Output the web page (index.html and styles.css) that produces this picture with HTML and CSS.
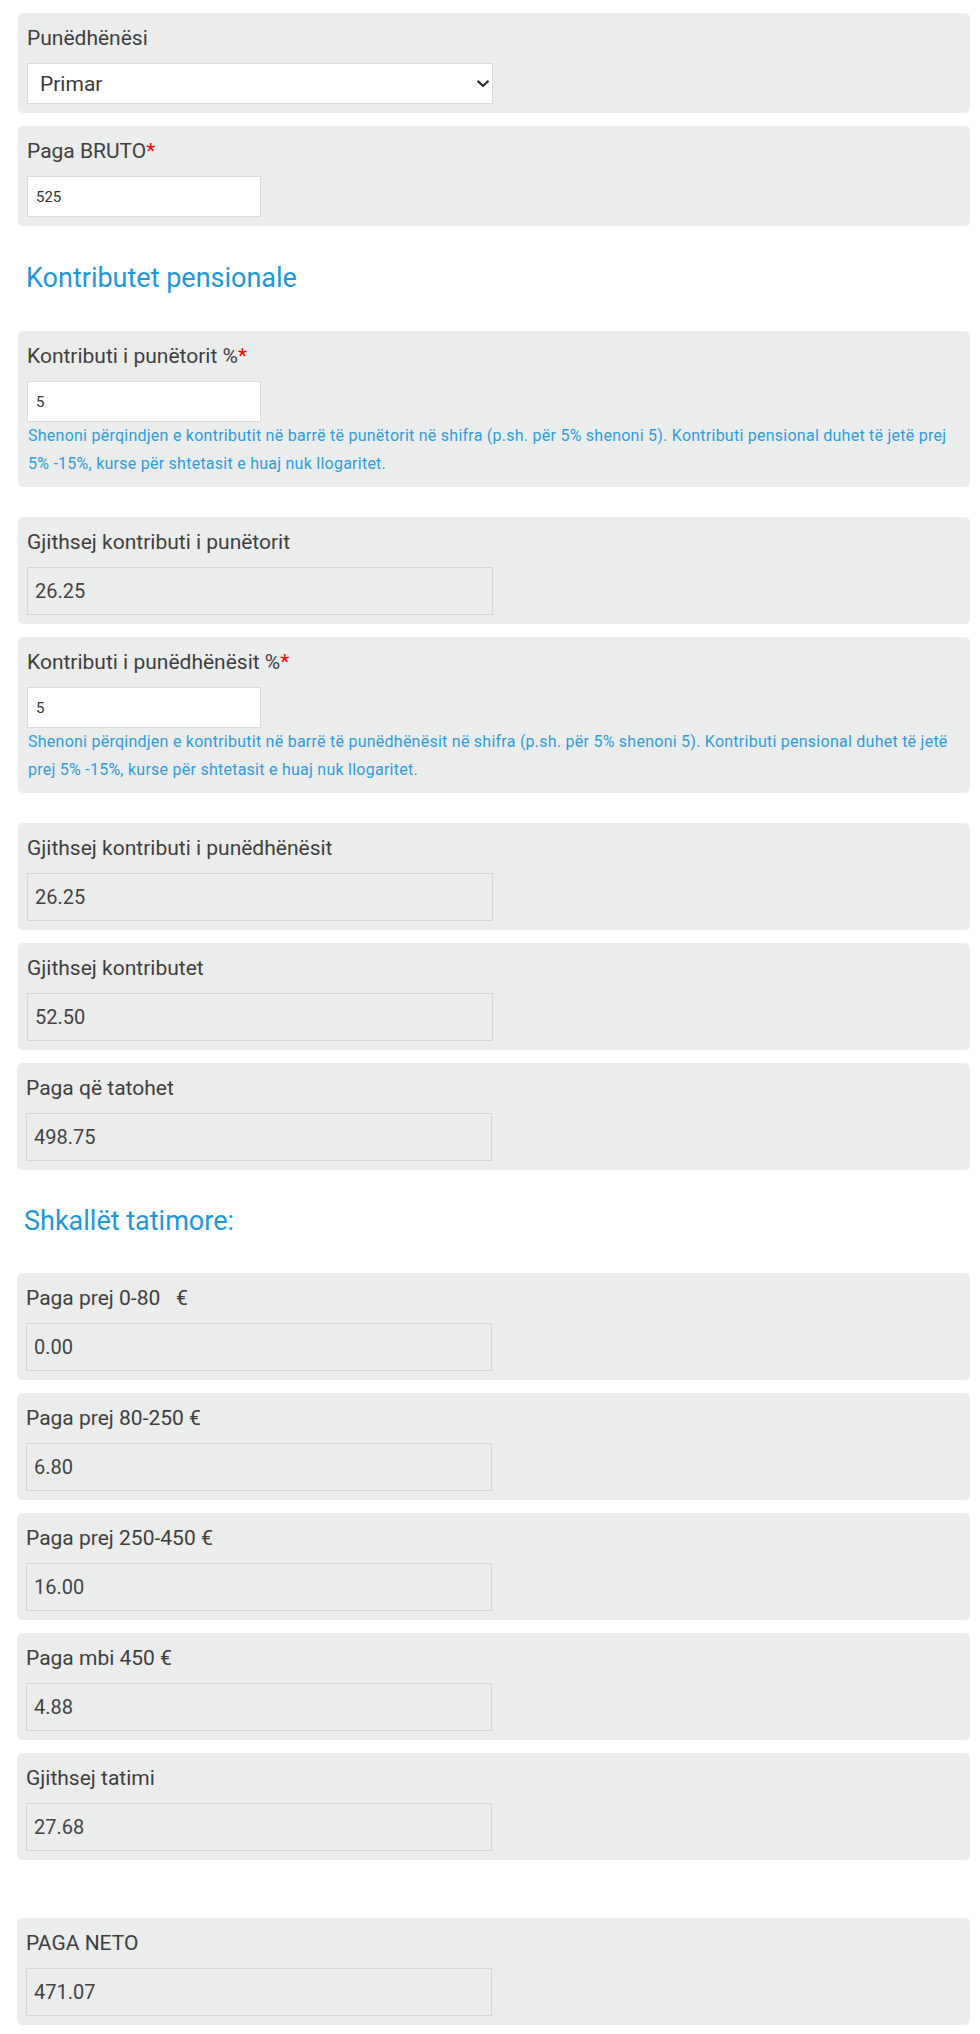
FILE: index.html
```html
<!DOCTYPE html>
<html lang="sq">
<head>
<meta charset="utf-8">
<title>Kalkulatori i pagës</title>
<link rel="stylesheet" href="styles.css">
</head>
<body>
<div class="form">
  <div class="card">
    <label class="card__label">Punëdhënësi</label>
    <div class="select-wrap">
      <select class="field field--select">
        <option>Primar</option>
        <option>Sekondar</option>
      </select>
      <svg class="select-wrap__chevron" width="12" height="8" viewBox="0 0 12 8" aria-hidden="true">
        <path d="M1.2 1.4 L6 6 L10.8 1.4" fill="none" stroke="#2f3337" stroke-width="2.2" stroke-linecap="round" stroke-linejoin="round"/>
      </svg>
    </div>
  </div>
  <div class="card">
    <label class="card__label">Paga BRUTO<span class="req">*</span></label>
    <input class="field field--input" type="text" value="525">
  </div>

  <h3 class="section-title">Kontributet pensionale</h3>

  <div class="card card--spaced">
    <label class="card__label">Kontributi i punëtorit %<span class="req">*</span></label>
    <input class="field field--input" type="text" value="5">
    <p class="help">Shenoni përqindjen e kontributit në barrë të punëtorit në shifra (p.sh. për 5% shenoni 5). Kontributi pensional duhet të jetë prej 5% -15%, kurse për shtetasit e huaj nuk llogaritet.</p>
  </div>
  <div class="card">
    <label class="card__label">Gjithsej kontributi i punëtorit</label>
    <input class="field field--readonly" type="text" value="26.25" readonly>
  </div>
  <div class="card card--spaced">
    <label class="card__label">Kontributi i punëdhënësit %<span class="req">*</span></label>
    <input class="field field--input" type="text" value="5">
    <p class="help">Shenoni përqindjen e kontributit në barrë të punëdhënësit në shifra (p.sh. për 5% shenoni 5). Kontributi pensional duhet të jetë prej 5% -15%, kurse për shtetasit e huaj nuk llogaritet.</p>
  </div>
  <div class="card">
    <label class="card__label">Gjithsej kontributi i punëdhënësit</label>
    <input class="field field--readonly" type="text" value="26.25" readonly>
  </div>
  <div class="card">
    <label class="card__label">Gjithsej kontributet</label>
    <input class="field field--readonly" type="text" value="52.50" readonly>
  </div>
  <div class="card card--shift">
    <label class="card__label">Paga që tatohet</label>
    <input class="field field--readonly" type="text" value="498.75" readonly>
  </div>

  <h3 class="section-title section-title--shift">Shkallët tatimore:</h3>

  <div class="card card--shift">
    <label class="card__label">Paga prej 0-80&nbsp;&nbsp; €</label>
    <input class="field field--readonly" type="text" value="0.00" readonly>
  </div>
  <div class="card card--shift">
    <label class="card__label">Paga prej 80-250 €</label>
    <input class="field field--readonly" type="text" value="6.80" readonly>
  </div>
  <div class="card card--shift">
    <label class="card__label">Paga prej 250-450 €</label>
    <input class="field field--readonly" type="text" value="16.00" readonly>
  </div>
  <div class="card card--shift">
    <label class="card__label">Paga mbi 450 €</label>
    <input class="field field--readonly" type="text" value="4.88" readonly>
  </div>
  <div class="card card--shift">
    <label class="card__label">Gjithsej tatimi</label>
    <input class="field field--readonly" type="text" value="27.68" readonly>
  </div>

  <div class="card card--shift card--final">
    <label class="card__label">PAGA NETO</label>
    <input class="field field--readonly" type="text" value="471.07" readonly>
  </div>
</div>
</body>
</html>
```

FILE: styles.css
```css
html, body {
  margin: 0;
  padding: 0;
  background: #ffffff;
}

body {
  font-family: Roboto, "Noto Sans", "Liberation Sans", Arial, sans-serif;
  color: #3b3b3b;
}

.form {
  display: flex;
  flex-direction: column;
  gap: 13px;
  padding: 13px 10px 11px 18px;
}

.card {
  background: #ebecec;
  border-radius: 5px;
  padding: 10px 9px 9px 9px;
}

.card--shift {
  margin-left: -1px;
}

.card--spaced {
  margin-bottom: 17px;
}

.card--final {
  margin-top: 45px;
}

.card__label {
  display: block;
  font-size: 21px;
  line-height: 30px;
  margin-bottom: 10px;
  color: #3f3f3f;
}

.req {
  color: #ff0000;
}

.field {
  box-sizing: border-box;
  display: block;
  margin: 0;
  font-family: inherit;
  border: 1px solid #dcdcdc;
  border-radius: 0;
  outline: none;
}

.select-wrap {
  position: relative;
  width: 466px;
}

.select-wrap__chevron {
  position: absolute;
  right: 4px;
  top: 17px;
  pointer-events: none;
}

.field--select {
  -webkit-appearance: none;
  appearance: none;
  width: 466px;
  height: 41px;
  font-size: 21px;
  padding: 0 24px 0 12px;
  background: #ffffff;
  color: #3a3a3a;
}

.field--input {
  width: 234px;
  height: 41px;
  font-size: 15px;
  padding: 0 8px;
  background: #ffffff;
  color: #333333;
}

.field--readonly {
  width: 466px;
  height: 48px;
  font-size: 20px;
  padding: 0 7px;
  background: #ebecec;
  color: #444444;
  border-color: #d6d6d6;
}

.help {
  margin: 0;
  padding-left: 1px;
  font-size: 16px;
  letter-spacing: 0.25px;
  line-height: 28px;
  color: #2e9ce0;
}

.section-title {
  margin: 24px 0 24px 8px;
  font-size: 27px;
  font-weight: 400;
  line-height: 31px;
  color: #1c97dd;
}

.section-title--shift {
  margin-left: 6px;
  margin-top: 23px;
  margin-bottom: 23px;
}
```
